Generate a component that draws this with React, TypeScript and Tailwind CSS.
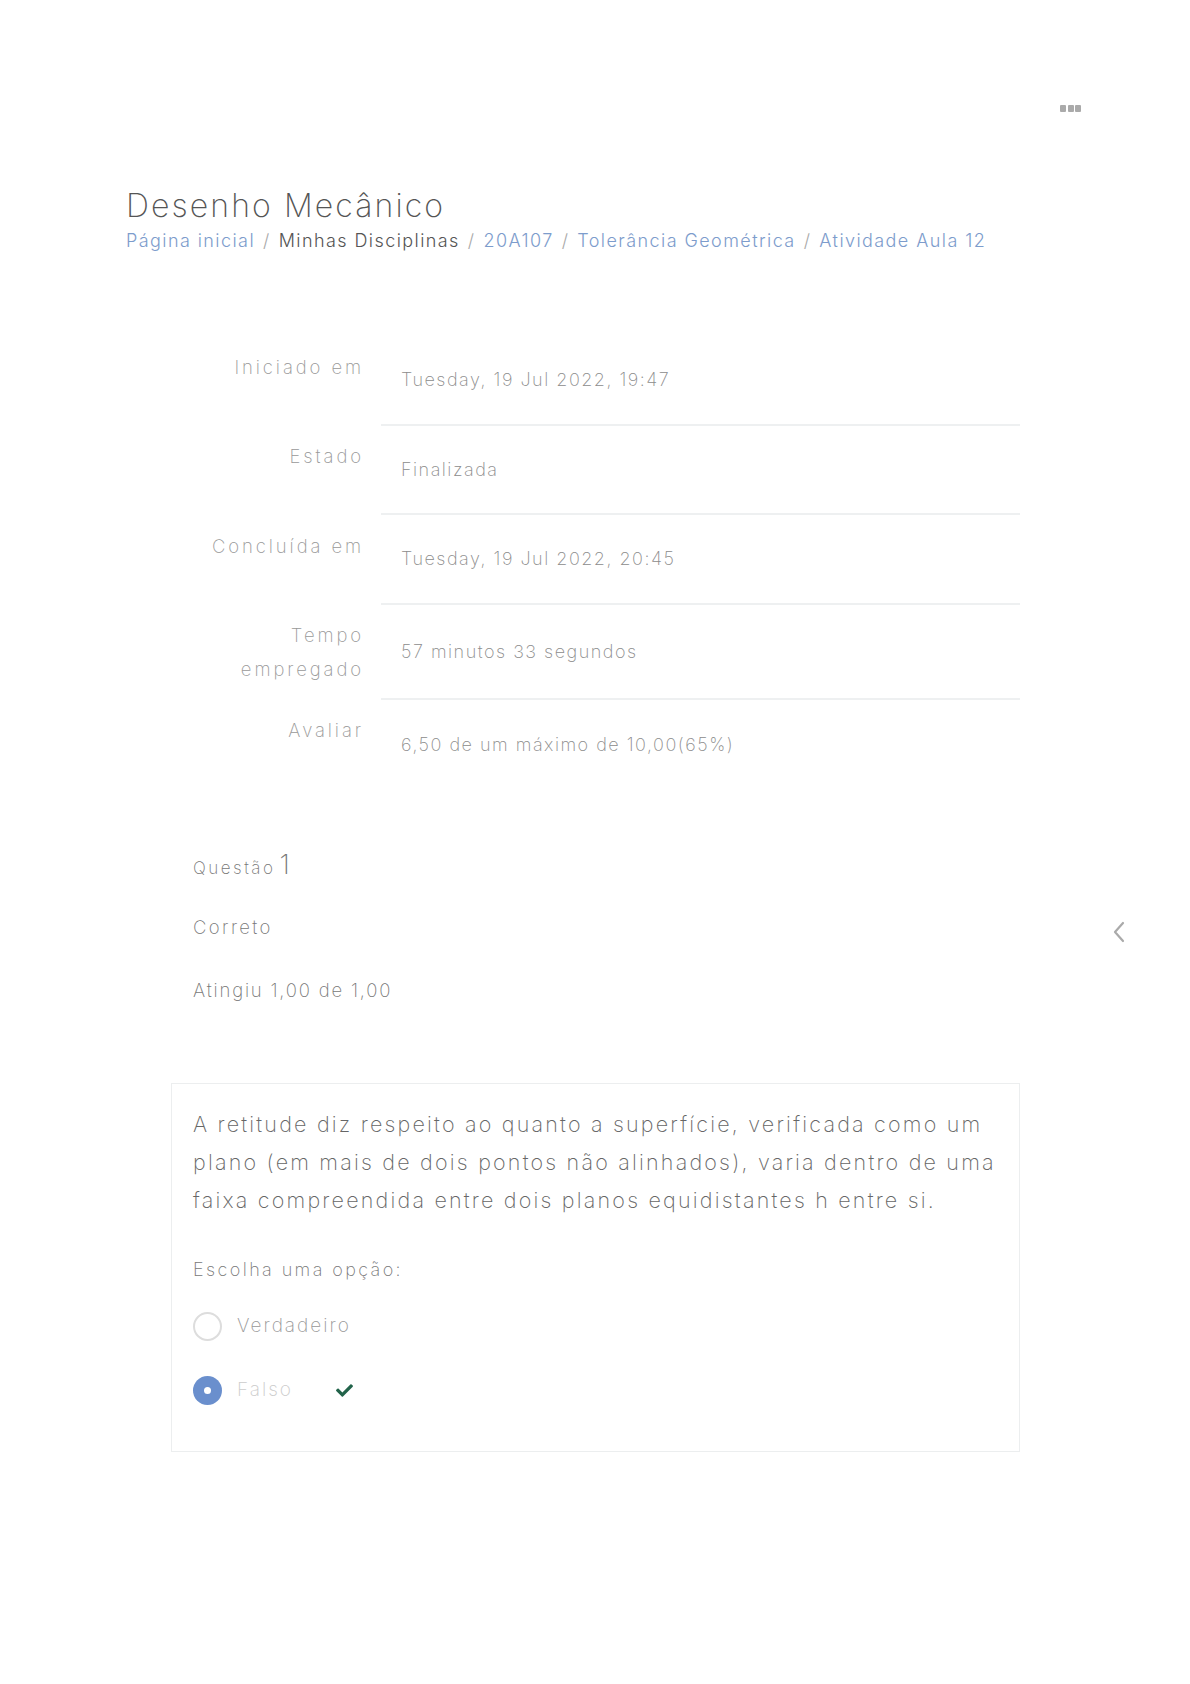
import React from "react";
import { FaCheck } from "react-icons/fa";

const rows: { label: string[]; value: string }[] = [
  { label: ["Iniciado em"], value: "Tuesday, 19 Jul 2022, 19:47" },
  { label: ["Estado"], value: "Finalizada" },
  { label: ["Concluída em"], value: "Tuesday, 19 Jul 2022, 20:45" },
  { label: ["Tempo", "empregado"], value: "57 minutos 33 segundos" },
  { label: ["Avaliar"], value: "6,50 de um máximo de 10,00(65%)" },
];

export default function App() {
  return (
    <div
      className="relative w-full min-h-[1684px] bg-white font-extralight"
      style={{ fontFamily: "Inter, 'Open Sans', sans-serif" }}
    >
      {/* top-right dots */}
      <div className="flex justify-end pt-[105px] pr-[109px]">
        <div className="flex gap-[1.5px]">
          <span className="block h-[7px] w-[6px] rounded-[1px] bg-[#aaaaaa]" />
          <span className="block h-[7px] w-[6px] rounded-[1px] bg-[#aaaaaa]" />
          <span className="block h-[7px] w-[6px] rounded-[1px] bg-[#aaaaaa]" />
        </div>
      </div>

      {/* header */}
      <div className="pl-[126px] pt-[75px]">
        <h1 className="text-[32px] leading-[38px] tracking-[2.1px] text-[#555555] font-extralight">
          Desenho Mecânico
        </h1>
        <nav className="mt-[3px] flex items-center text-[18px] leading-[26px] tracking-[1.42px] font-light">
          <span className="text-[#7d9ccc]">Página inicial</span>
          <span className="mx-[8px] text-[#aaaaaa]">/</span>
          <span className="text-[#555555]">Minhas Disciplinas</span>
          <span className="mx-[8px] text-[#aaaaaa]">/</span>
          <span className="text-[#7d9ccc]">20A107</span>
          <span className="mx-[8px] text-[#aaaaaa]">/</span>
          <span className="text-[#7d9ccc]">Tolerância Geométrica</span>
          <span className="mx-[8px] text-[#aaaaaa]">/</span>
          <span className="text-[#7d9ccc]">Atividade Aula 12</span>
        </nav>
      </div>

      {/* summary table */}
      <div className="mt-[82px] pl-[126px]">
        <div className="w-[894px]">
          {rows.map((r, i) => (
            <div key={i} className="flex items-stretch">
              <div className="w-[238px] shrink-0 pt-[14.5px] pb-[13.5px] text-right text-[18.5px] leading-[33.5px] tracking-[2.9px] text-[#999999]">
                {r.label.map((l) => (
                  <div key={l}>{l}</div>
                ))}
              </div>
              <div
                className={
                  "ml-[17px] flex min-h-[89.5px] w-[639px] items-center pl-[20px] text-[18px] leading-[27px] tracking-[1.5px] text-[#8c8c8c] " +
                  (i < rows.length - 1 ? "border-b-2 border-[#eef0f1]" : "")
                }
              >
                {r.value}
              </div>
            </div>
          ))}
        </div>
      </div>

      {/* question info */}
      <div className="mt-[63px] pl-[193px] text-[#777777]">
        <div className="flex items-baseline text-[17px] leading-[26px] tracking-[2.5px]">
          <span>Questão</span>
          <span className="ml-[4px] text-[27px] font-extralight">1</span>
        </div>
        <div className="mt-[33px] text-[18.5px] leading-[27px] tracking-[2.4px]">Correto</div>
        <div className="mt-[36px] text-[18.5px] leading-[27px] tracking-[1.8px]">Atingiu 1,00 de 1,00</div>
      </div>

      {/* question box */}
      <div className="ml-[171px] mt-[79px] w-[849px] border border-[#eceeef] pl-[21px] pr-[20px] pt-[21px] pb-[46px]">
        <p className="text-[21.5px] leading-[38px] tracking-[2.2px] text-[#666666]">
          A retitude diz respeito ao quanto a superfície, verificada como um plano (em mais de dois pontos não alinhados), varia dentro de uma faixa compreendida entre dois planos equidistantes h entre si.
        </p>
        <div className="mt-[37px] text-[18px] leading-[27px] tracking-[2.4px] text-[#777777]">Escolha uma opção:</div>
        <div className="mt-[28px] flex items-center h-[30px]">
          <span className="block h-[29px] w-[29px] rounded-full border-2 border-[#dddddd] bg-white" />
          <span className="ml-[15px] text-[19px] tracking-[2px] text-[#999999]">Verdadeiro</span>
        </div>
        <div className="mt-[34px] flex items-center h-[30px]">
          <span className="flex h-[29px] w-[29px] items-center justify-center rounded-full bg-[#6a8fcd]">
            <span className="block h-[7px] w-[7px] rounded-full bg-white" />
          </span>
          <span className="ml-[15px] text-[19px] tracking-[2px] text-[#cccccc]">Falso</span>
          <FaCheck className="ml-[42px] h-[17px] w-[19px] text-[#22634a]" />
        </div>
      </div>

      {/* drawer chevron */}
      <svg
        className="absolute left-[1112px] top-[921px]"
        width="14"
        height="22"
        viewBox="0 0 14 22"
      >
        <path d="M11 2 L3 11 L11 20" fill="none" stroke="#aaaaaa" strokeWidth="2.2" strokeLinecap="round" strokeLinejoin="round" />
      </svg>
    </div>
  );
}
